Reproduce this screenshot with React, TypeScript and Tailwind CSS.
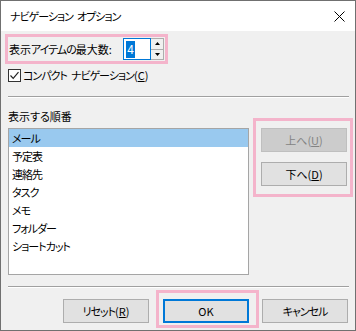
import React from "react";

const items = ["メール", "予定表", "連絡先", "タスク", "メモ", "フォルダー", "ショートカット"];

// katakana in the reference font is much narrower than in Noto, so tighten it
const kana = "tracking-[-1px]";

function Btn({ children, disabled, focused, className = "" }: { children: React.ReactNode; disabled?: boolean; focused?: boolean; className?: string }) {
    const base = "flex items-center justify-center w-[86px] h-[24px] text-[11px]";
    const look = disabled
        ? "bg-[#cccccc] border border-[#bfbfbf] text-[#838383]"
        : focused
            ? "bg-[#e1e1e1] border-2 border-[#0078d7] text-black"
            : "bg-[#e1e1e1] border border-[#adadad] text-black";
    return <div className={`${base} ${look} ${className}`}>{children}</div>;
}

export default function App() {
    return (
        <div className="w-[356px] h-[331px] border border-[#707070] bg-[#f0f0f0] flex flex-col overflow-hidden text-black text-[11px] font-['Noto_Sans_CJK_JP',sans-serif] [font-feature-settings:'palt'] leading-none whitespace-nowrap">
            {/* title bar */}
            <div className="h-[30px] bg-white flex items-center justify-between pl-[9px] pr-[10px] shrink-0">
                <span className="flex">
                    <span className={kana}>ナビゲーション</span>
                    <span className={`ml-[4px] ${kana}`}>オプション</span>
                </span>
                <svg width="11" height="11" viewBox="0 0 11 11">
                    <path d="M0.5 0.5 L10.5 10.5 M10.5 0.5 L0.5 10.5" stroke="#000" strokeWidth="1" />
                </svg>
            </div>

            <div className="flex flex-col pl-[4px]">
                {/* max items */}
                <div className="mt-[3px] w-[163px] h-[30px] border-[3px] border-[#f4b4cb] flex items-center pl-[1px]">
                    <span>表示<span className={kana}>アイテムの</span>最大数:</span>
                    <div className="ml-auto mr-[1px] flex h-[22px]">
                        <div className="w-[28px] h-full border border-[#0078d7] bg-white flex items-center pl-[2px]">
                            <span className="bg-[#0078d7] text-white text-[12px] h-[17px] w-[9px] flex items-center justify-center">4</span>
                        </div>
                        <div className="w-[13px] h-full flex flex-col border border-l-0 border-[#adadad] bg-white">
                            <div className="flex-1 flex items-center justify-center border-b border-[#adadad] bg-[#f0f0f0]">
                                <svg width="5" height="3" viewBox="0 0 5 3"><path d="M2.5 0 L5 3 L0 3 Z" fill="#000" /></svg>
                            </div>
                            <div className="flex-1 flex items-center justify-center bg-[#f0f0f0]">
                                <svg width="5" height="3" viewBox="0 0 5 3"><path d="M0 0 L5 0 L2.5 3 Z" fill="#000" /></svg>
                            </div>
                        </div>
                    </div>
                </div>

                {/* compact checkbox */}
                <div className="mt-[4px] h-[15px] flex items-center ml-[3px]">
                    <div className="w-[13px] h-[13px] border border-[#333333] bg-white flex items-center justify-center">
                        <svg width="11" height="11" viewBox="0 0 11 11">
                            <path d="M1.5 5.5 L4.2 8.3 L9.5 2.2" stroke="#222" strokeWidth="1.2" fill="none" />
                        </svg>
                    </div>
                    <span className="ml-[2px] flex">
                        <span className={kana}>コンパクト</span>
                        <span className={`ml-[4px] ${kana}`}>ナビゲーション</span>
                        <span>(<span className="underline">C</span>)</span>
                    </span>
                </div>

                <div className="mt-[13px] ml-[3px] w-[341px] border-t border-[#a0a0a0] border-b border-b-white" />

                {/* order */}
                <div className="mt-[10px] flex items-start">
                    <div className="flex flex-col ml-[3px]">
                        <span className="h-[16px] flex items-center">表示する順番</span>
                        <div className="mt-[4px] w-[241px] h-[147px] border border-[#a5a5a5] bg-white flex flex-col">
                            {items.map((it, i) => (
                                <div key={it} className={`h-[18px] flex items-center pl-[3px] ${kana} ${i === 0 ? "bg-[#99c9ef]" : ""}`}>
                                    {it}
                                </div>
                            ))}
                        </div>
                    </div>
                    <div className="ml-[4px] mt-[10px] w-[100px] h-[79px] border-[3px] border-[#f4b4cb] flex flex-col pl-[5px] pt-[7px] gap-[10px]">
                        <Btn disabled>上へ(<span className="underline">U</span>)</Btn>
                        <Btn>下へ(<span className="underline">D</span>)</Btn>
                    </div>
                </div>

                <div className="mt-[11px] ml-[3px] w-[341px] border-t border-[#a0a0a0] border-b border-b-white" />

                {/* buttons */}
                <div className="mt-[2px] flex items-start">
                    <Btn className="ml-[58px] mt-[9px]"><span className={kana}>リセット</span>(<span className="underline">R</span>)</Btn>
                    <div className="ml-[7px] w-[103px] h-[38px] border-[3px] border-[#f4b4cb] pl-[4px] pt-[6px]">
                        <Btn focused>OK</Btn>
                    </div>
                    <Btn className="ml-[3px] mt-[9px]"><span className={kana}>キャンセル</span></Btn>
                </div>
            </div>
        </div>
    );
}
